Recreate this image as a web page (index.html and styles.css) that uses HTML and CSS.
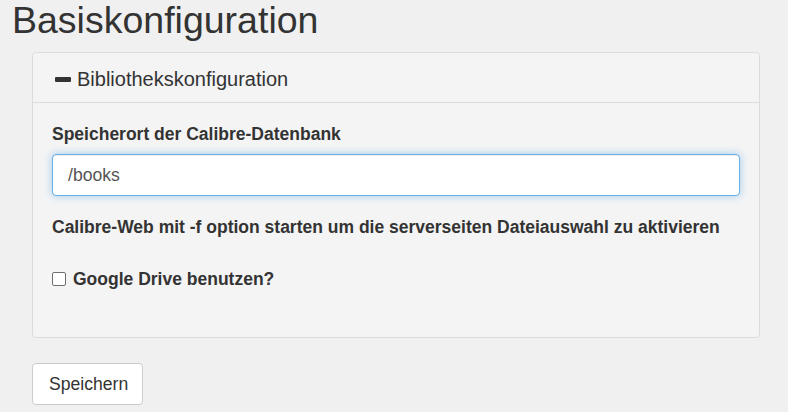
FILE: index.html
```html
<!DOCTYPE html>
<html lang="de">
<head>
<meta charset="utf-8">
<title>Basiskonfiguration</title>
<link rel="stylesheet" href="styles.css">
</head>
<body>
<div class="page">
  <h1 class="title">Basiskonfiguration</h1>
  <div class="panel">
    <div class="panel-heading">
      <span class="minus-icon"></span>
      <span class="heading-text">Bibliothekskonfiguration</span>
    </div>
    <div class="panel-body">
      <label class="field-label" for="dbpath">Speicherort der Calibre-Datenbank</label>
      <input class="text-input" id="dbpath" type="text" value="/books">
      <div class="hint">Calibre-Web mit -f option starten um die serverseiten Dateiauswahl zu aktivieren</div>
      <label class="check-row"><input class="check" type="checkbox"><span>Google Drive benutzen?</span></label>
    </div>
  </div>
  <button class="btn" type="button">Speichern</button>
</div>
</body>
</html>
```
FILE: styles.css
```css
html, body {
  margin: 0;
  padding: 0;
  background: #f0f0f0;
}
body {
  font-family: "Liberation Sans", Arial, sans-serif;
  color: #333;
  font-size: 17.6px;
}
.page {
  padding: 0 0 0 12px;
}
.title {
  margin: 0;
  font-size: 37.5px;
  line-height: 40px;
  font-weight: normal;
  color: #333;
}
.panel {
  margin: 12px 0 0 20px;
  width: 726px;
  border: 1px solid #dcdcdc;
  border-radius: 4px;
  background: #f4f4f4;
}
.panel-heading {
  display: flex;
  align-items: center;
  padding: 15px 22px 12px;
  height: 22px;
  border-bottom: 1px solid #dcdcdc;
  background: #f4f4f4;
  border-radius: 4px 4px 0 0;
}
.minus-icon {
  display: block;
  width: 16px;
  height: 5px;
  background: #333;
  border-radius: 1px;
  margin-right: 6px;
  margin-top: 1px;
}
.heading-text {
  font-size: 20px;
  line-height: 22px;
}
.panel-body {
  padding: 21px 19px 48px;
  display: flex;
  flex-direction: column;
  align-items: flex-start;
}
.field-label {
  display: block;
  font-weight: bold;
  font-size: 17.5px;
  line-height: 20px;
  margin-bottom: 10px;
}
.text-input {
  box-sizing: border-box;
  width: 688px;
  height: 42px;
  margin: 0;
  padding: 0 15px;
  border: 1px solid #66afe9;
  border-radius: 4px;
  background: #fff;
  font-family: inherit;
  font-size: 17.6px;
  color: #555;
  outline: none;
  box-shadow: inset 0 1px 1px rgba(0,0,0,.075), 0 0 8px rgba(102,175,233,.6);
}
.hint {
  margin-top: 21px;
  font-weight: bold;
  font-size: 17.5px;
  line-height: 20px;
}
.check-row {
  display: flex;
  align-items: center;
  margin-top: 32px;
  font-weight: bold;
  font-size: 17.5px;
  line-height: 20px;
}
.check {
  appearance: none;
  -webkit-appearance: none;
  box-sizing: border-box;
  width: 14px;
  height: 14px;
  margin: 0 7px 0 0;
  border: 1px solid #6f6f6f;
  border-radius: 2px;
  background: #fff;
}
.btn {
  display: block;
  box-sizing: border-box;
  margin: 25px 0 0 20px;
  width: 111px;
  height: 42px;
  padding: 0 16px;
  border: 1px solid #ccc;
  border-radius: 4px;
  background: #fff;
  font-family: inherit;
  font-size: 17.6px;
  color: #333;
}
```
